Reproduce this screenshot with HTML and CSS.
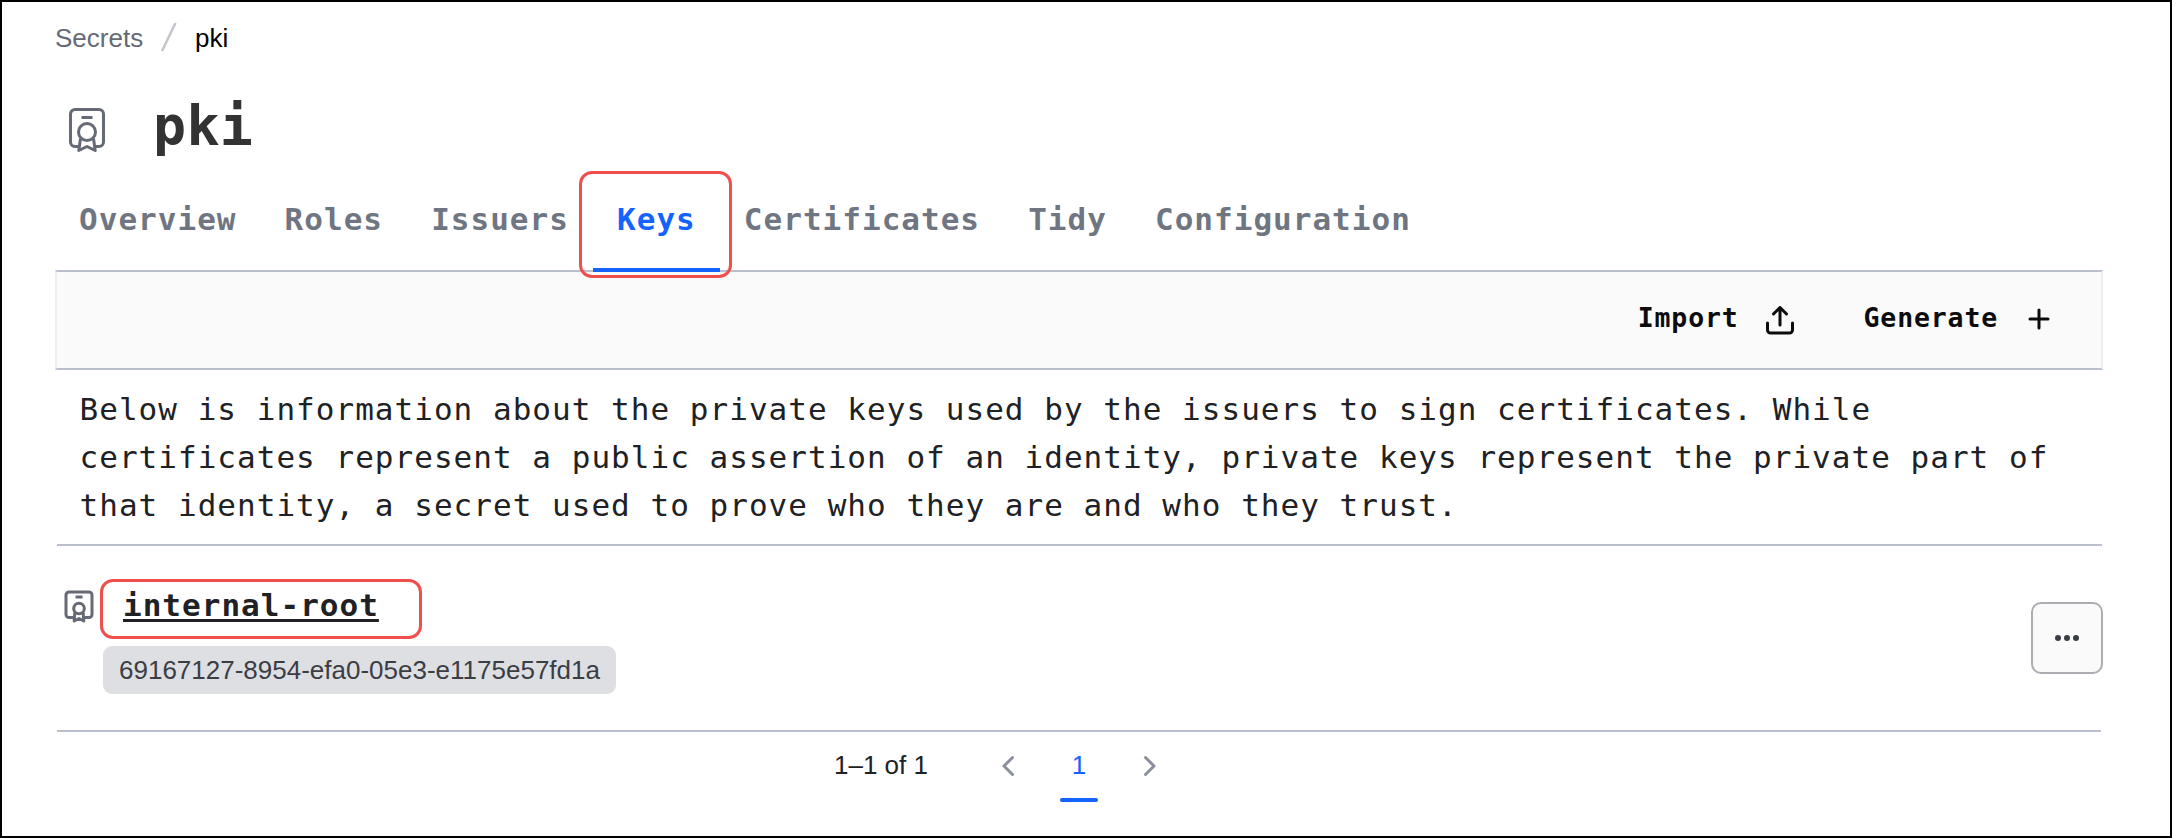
FILE: index.html
```html
<!DOCTYPE html>
<html lang="en">
<head>
<meta charset="utf-8">
<title>pki</title>
<link rel="stylesheet" href="styles.css">
</head>
<body>
<div class="page">
  <nav class="breadcrumb">
    <a class="crumb">Secrets</a>
    <svg class="slash" width="18" height="32" viewBox="0 0 18 32"><path d="M2 30 15.500 2" stroke="#c2c5cb" stroke-width="2.500"/></svg>
    <span class="crumb-current">pki</span>
  </nav>
  <header class="title-row">
    <svg class="title-icon" width="48" height="48" viewBox="0 0 48 48" fill="none" stroke="currentColor" stroke-width="3" stroke-linejoin="round">
      <path d="M15 39.500H11A4.500 4.500 0 0 1 6.500 35V7A4.500 4.500 0 0 1 11 2.500H35A4.500 4.500 0 0 1 39.500 7V35A4.500 4.500 0 0 1 35 39.500H31M17.500 10.500H28.500"/>
      <circle cx="23" cy="25" r="8.500"/>
      <path d="M16.500 31.500 14.800 43.500 23 39.500 31.200 43.500 29.500 31.500"/>
    </svg>
    <h1 class="title">pki</h1>
  </header>
  <nav class="tabs">
    <a class="tab">Overview</a><a class="tab">Roles</a><a class="tab">Issuers</a><a class="tab tab-active">Keys</a><a class="tab">Certificates</a><a class="tab">Tidy</a><a class="tab">Configuration</a>
  </nav>
  <div class="toolbar">
    <a class="action"><span>Import</span>
      <svg class="upload" width="32" height="32" viewBox="0 0 32 32" fill="none" stroke="currentColor" stroke-width="3" stroke-linecap="round" stroke-linejoin="round"><path d="M3.500 19v7a3 3 0 0 0 3 3h19a3 3 0 0 0 3-3v-7M16 21V3.500M9.500 10 16 3.500 22.500 10"/></svg>
    </a>
    <a class="action"><span>Generate</span>
      <svg width="32" height="32" viewBox="0 0 32 32" fill="none" stroke="currentColor" stroke-width="3" stroke-linecap="round"><path d="M16 8v18M7 17h18"/></svg>
    </a>
  </div>
  <p class="intro">Below is information about the private keys used by the issuers to sign certificates. While<br>certificates represent a public assertion of an identity, private keys represent the private part of<br>that identity, a secret used to prove who they are and who they trust.</p>
  <div class="key-row">
    <svg class="key-icon" width="36" height="36" viewBox="0 0 36 36" fill="none" stroke="currentColor" stroke-width="3" stroke-linejoin="round">
      <path d="M12 29.500H8A3 3 0 0 1 5 26.500V7A3 3 0 0 1 8 4H28A3 3 0 0 1 31 7V26.500A3 3 0 0 1 28 29.500H24M14.500 9H21.500"/>
      <circle cx="18" cy="20.500" r="5.300"/>
      <path d="M13.800 24.500 13.200 33 18 30.500 22.800 33 22.200 24.500"/>
    </svg>
    <div class="key-info">
      <div class="key-frame"><a class="key-name">internal-root</a></div>
      <span class="key-id">69167127-8954-efa0-05e3-e1175e57fd1a</span>
    </div>
    <button class="more" aria-label="More options">
      <svg width="24" height="8" viewBox="0 0 24 8" fill="currentColor"><circle cx="3" cy="4" r="3"/><circle cx="12" cy="4" r="3"/><circle cx="21" cy="4" r="3"/></svg>
    </button>
  </div>
  <footer class="pagination">
    <span class="range">1–1 of 1</span>
    <svg width="16" height="24" viewBox="0 0 16 24" class="chevron"><path d="M12.500 3.500 4 12l8.500 8.500"/></svg>
    <span class="page-number">1</span>
    <svg width="16" height="24" viewBox="0 0 16 24" class="chevron"><path d="M3.500 3.500 12 12l-8.500 8.500"/></svg>
  </footer>
</div>
</body>
</html>
```

FILE: styles.css
```css
*, *::before, *::after { box-sizing: border-box; }
body { margin: 0; background: #fff; font-family: "Liberation Sans", Arial, sans-serif; font-size: 26px; }
svg { display: block; flex: none; }
.page { width: 2172px; height: 838px; border: 2px solid #000; padding: 0 66px 0 53px; overflow: hidden; }

.breadcrumb { display: flex; align-items: center; height: 68px; padding-top: 4px; }
.crumb { color: #656a76; width: 105px; }
.crumb-current { color: #000; margin-left: 17px; }
.slash { margin-top: -3px; }

.title-row { display: flex; height: 104px; }
.title-icon { color: #656a76; margin: 37px 0 0 9px; }
.title, .tab, .action, .intro, .key-name { font-family: "DejaVu Sans Mono", monospace; }
.title { margin: 20px 0 0 41px; font-size: 55px; line-height: 72px; letter-spacing: .300px; color: #333; }

.tabs { display: flex; height: 96px; }
.tab { padding: 27px 24.050px 0; font-size: 31px; line-height: 36px; letter-spacing: 1.020px; font-weight: bold; color: #6f7682; height: 98px; }
.tab-active { position: relative; color: #1563ff; border-bottom: 4px solid #1563ff; z-index: 1; }
.tab-active::after { content: ""; position: absolute; left: -14px; width: 153px; top: -3px; height: 107px; border: 3px solid #ee4f4d; border-radius: 13px; }

.toolbar { display: flex; justify-content: flex-end; align-items: center; gap: 68px; height: 100px; padding: 0 46px 4px 0; background: #fafafa; border: 2px solid #ebeef2; border-top-color: #bac1cc; border-bottom-color: #bac1cc; width: 2048px; }
.action { display: flex; align-items: center; gap: 25px; font-size: 26.500px; letter-spacing: .850px; font-weight: bold; color: #0c0c0e; }
.action span { margin-top: -2px; }
.upload { margin-top: 3px; }

.intro { margin: 0 2px; height: 176px; padding: 15px 0 0 22.500px; border-bottom: 2px solid #bac1cc; font-size: 31px; line-height: 48px; letter-spacing: 1.025px; color: #202124; white-space: nowrap; }

.key-row { display: flex; margin: 0 0 0 2px; height: 186px; background: linear-gradient(#bac1cc, #bac1cc) 0 100% / 2044px 2px no-repeat; }
.key-icon { color: #656a76; margin: 42px 0 0 4px; }
.key-info { margin: 33px 0 0 3px; flex: 1; }
.key-frame { width: 322px; height: 60px; border: 3px solid #ee4f4d; border-radius: 13px; padding: 5px 0 0 20px; }
.key-name { font-size: 31px; line-height: 36px; letter-spacing: 1.020px; font-weight: bold; color: #202124; text-decoration: underline; text-decoration-thickness: 3px; text-underline-offset: 3px; }
.key-id { display: flex; align-items: center; width: 513px; height: 48px; margin: 7px 0 0 3px; padding-left: 16px; border-radius: 9px; background: #dedfe3; color: #3b3d45; }
.more { display: flex; align-items: center; justify-content: center; width: 72px; height: 72px; margin: 56px 1px 0 0; padding: 0; border: 2px solid #acadb3; border-radius: 10px; background: #fafafa; color: #3b3d45; }

.pagination { display: flex; align-items: center; height: 67px; padding-left: 779px; }
.range { width: 166px; color: #202124; }
.page-number { position: relative; width: 38px; margin: 0 44px 0 44px; text-align: center; color: #1563ff; }
.page-number::after { content: ""; position: absolute; left: 0; right: 0; bottom: -21px; height: 4px; border-radius: 2px; background: #1563ff; }
.chevron { fill: none; stroke: #8c909c; stroke-width: 3; stroke-linecap: round; stroke-linejoin: round; }
```
